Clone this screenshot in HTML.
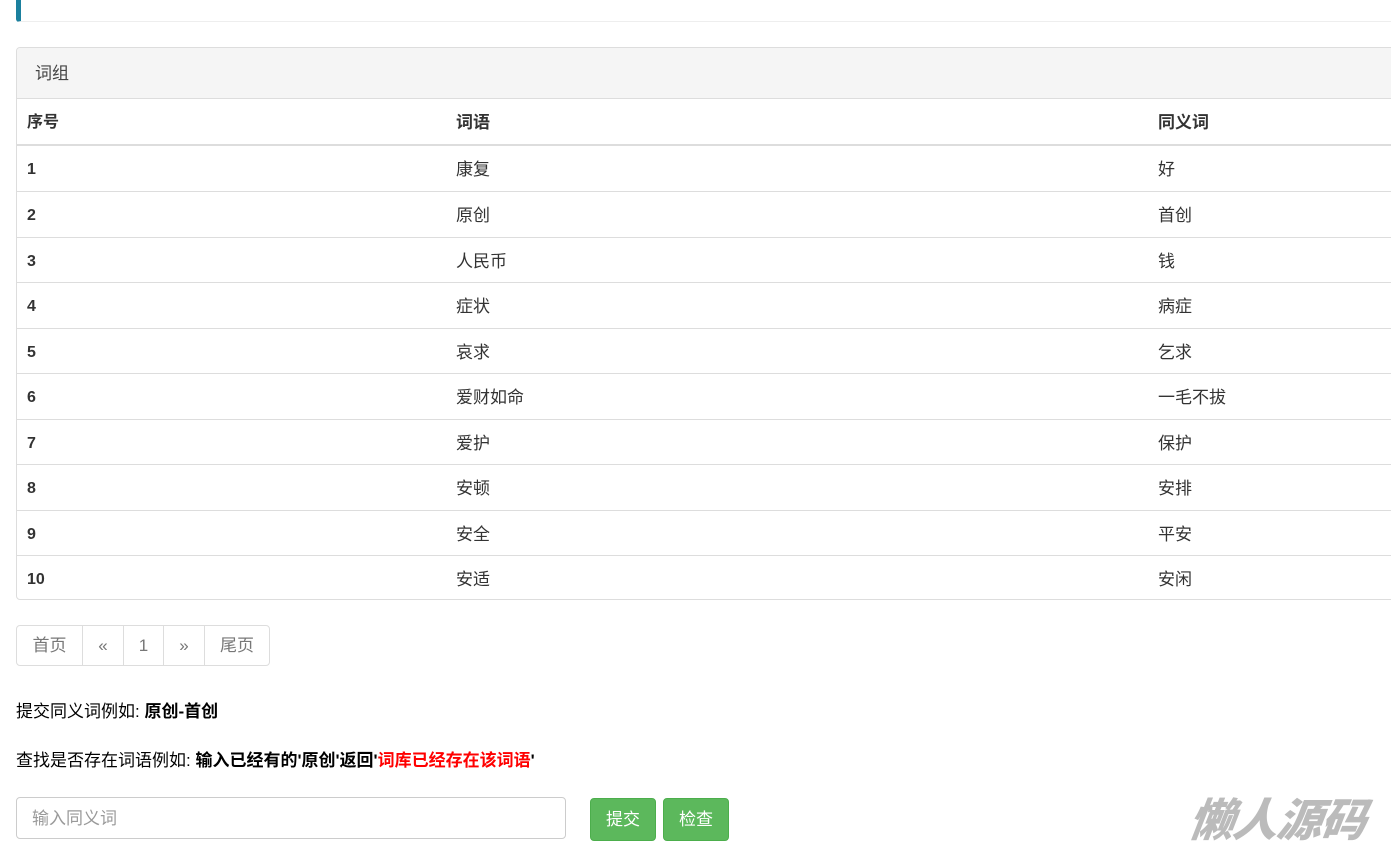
<!DOCTYPE html>
<html><head><meta charset="utf-8"><style>
*{box-sizing:border-box;margin:0;padding:0}
body{width:1391px;height:849px;overflow:hidden;background:#fff;font-family:"Liberation Sans","Noto Sans CJK SC",sans-serif;font-size:17px;color:#333;position:relative}
.a{position:absolute}
.top{left:16px;top:-10px;width:1400px;height:32px;border-bottom:1px solid #eee;border-left:5px solid #1b809e;border-radius:3px}
.panel{left:16px;top:47px;width:1400px;height:553px;border:1px solid #ddd;border-radius:4px;overflow:hidden}
.ph{position:absolute;left:0;top:0;right:0;height:51px;background:#f5f5f5;border-bottom:1px solid #ddd;padding-left:18px;line-height:51px;color:#444}
.row{position:absolute;left:0;right:0;border-top:1px solid #ddd;height:46px}
.row span{position:absolute;top:2px;line-height:44px}
.c1{left:10px;font-weight:bold;font-size:16px}.c2{left:439px}.c3{left:1141px}
.hd{font-weight:bold;border-top:none;border-bottom:2px solid #ddd}
.pg{top:625px;left:16px;height:41px;display:flex;border:1px solid #ddd;border-radius:4px;overflow:hidden}
.pg div{border-left:1px solid #ddd;height:100%;line-height:39px;text-align:center;color:#777}
.pg div:first-child{border-left:none}
.btn{top:798px;height:43px;background:#5cb85c;border:1px solid #4cae4c;border-radius:4px;color:#fff;line-height:41px;text-align:center}
</style></head><body>
<div class="a top"></div>
<div class="a panel">
<div class="ph">词组</div>
<div class="row hd" style="top:51px;height:47px"><span class="c1">序号</span><span class="c2" style="font-weight:bold">词语</span><span class="c3" style="font-weight:bold">同义词</span></div>
<div class="row" style="top:98px;border-top:none"><span class="c1">1</span><span class="c2">康复</span><span class="c3">好</span></div>
<div class="row" style="top:143px"><span class="c1">2</span><span class="c2">原创</span><span class="c3">首创</span></div>
<div class="row" style="top:189px"><span class="c1">3</span><span class="c2">人民币</span><span class="c3">钱</span></div>
<div class="row" style="top:234px"><span class="c1">4</span><span class="c2">症状</span><span class="c3">病症</span></div>
<div class="row" style="top:280px"><span class="c1">5</span><span class="c2">哀求</span><span class="c3">乞求</span></div>
<div class="row" style="top:325px"><span class="c1">6</span><span class="c2">爱财如命</span><span class="c3">一毛不拔</span></div>
<div class="row" style="top:371px"><span class="c1">7</span><span class="c2">爱护</span><span class="c3">保护</span></div>
<div class="row" style="top:416px"><span class="c1">8</span><span class="c2">安顿</span><span class="c3">安排</span></div>
<div class="row" style="top:462px"><span class="c1">9</span><span class="c2">安全</span><span class="c3">平安</span></div>
<div class="row" style="top:507px"><span class="c1">10</span><span class="c2">安适</span><span class="c3">安闲</span></div>
</div>
<div class="a pg"><div style="width:65px">首页</div><div style="width:41px">«</div><div style="width:40px">1</div><div style="width:41px">»</div><div style="width:65px">尾页</div></div>
<div class="a" style="left:16px;top:697px;color:#000">提交同义词例如: <b>原创-首创</b></div>
<div class="a" style="left:16px;top:746px;color:#000">查找是否存在词语例如: <b>输入已经有的'原创'返回'<span style="color:#f00">词库已经存在该词语</span>'</b></div>
<div class="a" style="left:16px;top:797px;width:550px;height:42px;border:1px solid #ccc;border-radius:4px;padding:0 0 0 15px;line-height:41px;color:#999">输入同义词</div>
<div class="a btn" style="left:590px;width:66px">提交</div>
<div class="a btn" style="left:663px;width:66px">检查</div>
<div class="a" style="left:1190px;top:784px;font-size:45px;font-weight:900;font-style:italic;color:#bbb;letter-spacing:-1px;transform:skewX(-8deg)">懒人源码</div>
</body></html>
